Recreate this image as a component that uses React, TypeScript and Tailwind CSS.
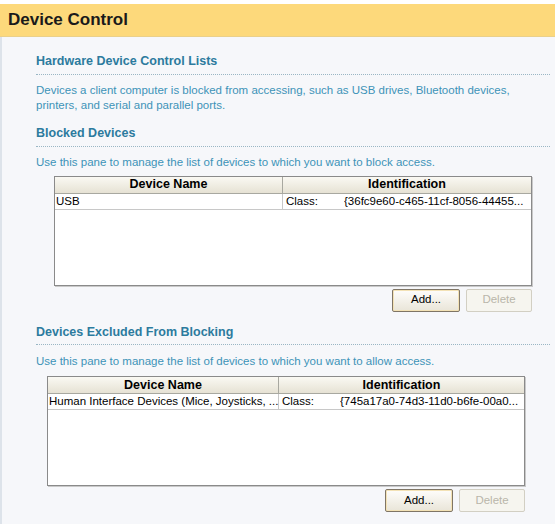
import React from 'react';

type Row = { name: string; cls: string };

function DeviceTable({ rows, split, offset }: { rows: Row[]; split: number; offset: string }) {
  return (
    <div className={`${offset} w-[478px]`}>
      <div className="h-[110px] border border-[#8a8a8a] bg-white shadow-[1px_1px_0_#c9c9c9]">
        <div className="flex h-[17px] border-b border-[#a8a8a0] bg-gradient-to-b from-[#faf9f3] to-[#e6e2d4] text-[12.5px] font-bold text-black">
          <div className="flex items-center justify-center border-r border-[#a8a8a0]" style={{ width: split }}>
            Device Name
          </div>
          <div className="flex flex-1 items-center justify-center">Identification</div>
        </div>
        {rows.map((r) => (
          <div key={r.name} className="flex h-[16px] border-b border-[#c8c8c8] text-[11.5px] leading-[15px] text-black">
            <div className="overflow-hidden whitespace-nowrap border-r border-[#c8c8c8] pl-[1px]" style={{ width: split }}>
              {r.name}
            </div>
            <div className="flex flex-1 pl-[3px]">
              <span className="w-[58px]">Class:</span>
              <span className="overflow-hidden whitespace-nowrap">{r.cls}</span>
            </div>
          </div>
        ))}
      </div>
      <div className="mt-[3px] flex justify-end gap-[6px] text-[11.5px]">
        <button className="h-[23px] w-[68px] rounded-[2px] border border-[#7f7565] bg-gradient-to-b from-[#fefdfb] to-[#e9e5d8] text-black shadow-[inset_0_0_0_1px_#f3e2b6]">
          Add...
        </button>
        <button className="h-[23px] w-[66px] rounded-[2px] border border-[#d2cfc3] bg-[#f6f5ef] text-[#b9b5aa]">
          Delete
        </button>
      </div>
    </div>
  );
}

function SectionTitle({ children }: { children: React.ReactNode }) {
  return (
    <div className="border-b border-dotted border-[#9ab6c4] pb-[3px] text-[12.5px] font-bold text-[#2c7b9e]">
      {children}
    </div>
  );
}

export default function App() {
  return (
    <div className="h-[524px] w-[560px] bg-white pt-[4px]" style={{ fontFamily: '"Liberation Sans", Arial, sans-serif' }}>
      <div className="mr-[5px] flex h-[33px] items-center border-b border-[#ead08a] bg-[#fdd97b] pl-[8px] text-[17px] font-bold text-[#1a1a1a]">
        Device Control
      </div>
      <div className="mr-[5px] h-[487px] border-l-2 border-[#dde3ea] bg-[#f6f7fa] pl-[34px] pr-[5px] pt-[15px]">
        <SectionTitle>Hardware Device Control Lists</SectionTitle>
        <p className="mt-[8px] text-[11.5px] leading-[15px] text-[#3d93b8]">
          Devices a client computer is blocked from accessing, such as USB drives, Bluetooth devices,
          <br />
          printers, and serial and parallel ports.
        </p>
        <div className="mt-[11px]">
          <SectionTitle>Blocked Devices</SectionTitle>
        </div>
        <p className="mt-[8px] text-[11.5px] leading-[15px] text-[#3d93b8]">
          Use this pane to manage the list of devices to which you want to block access.
        </p>
        <div className="mt-[6px]">
          <DeviceTable
            offset="ml-[18px]"
            split={228}
            rows={[{ name: 'USB', cls: '{36fc9e60-c465-11cf-8056-44455...' }]}
          />
        </div>
        <div className="mt-[11px]">
          <SectionTitle>Devices Excluded From Blocking</SectionTitle>
        </div>
        <p className="mt-[9px] text-[11.5px] leading-[15px] text-[#3d93b8]">
          Use this pane to manage the list of devices to which you want to allow access.
        </p>
        <div className="mt-[7px]">
          <DeviceTable
            offset="ml-[11px]"
            split={231}
            rows={[{ name: 'Human Interface Devices (Mice, Joysticks, ...', cls: '{745a17a0-74d3-11d0-b6fe-00a0...' }]}
          />
        </div>
      </div>
    </div>
  );
}
